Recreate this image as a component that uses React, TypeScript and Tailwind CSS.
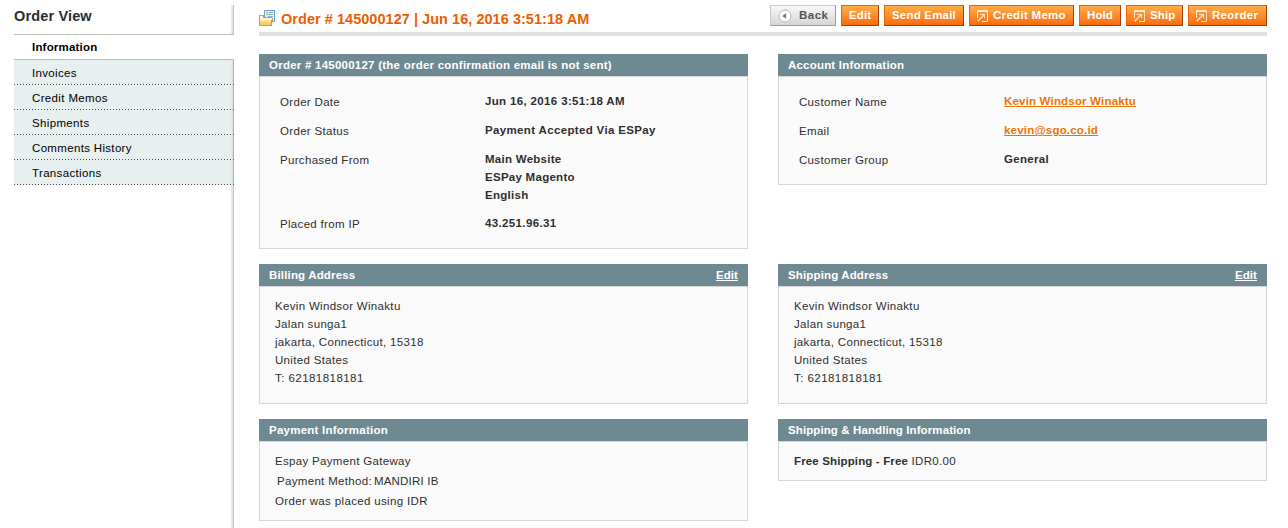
import type { ReactNode } from "react";

const tabs = [
  { label: "Invoices", tracking: "tracking-[0.32px]" },
  { label: "Credit Memos", tracking: "tracking-[0.36px]" },
  { label: "Shipments", tracking: "tracking-[0.35px]" },
  { label: "Comments History", tracking: "tracking-[0.33px]" },
  { label: "Transactions", tracking: "tracking-[0.35px]" },
];

function OrderIcon() {
  return (
    <svg width="16" height="16" viewBox="0 0 16 16" className="shrink-0" shapeRendering="crispEdges">
      <rect x="5" y="0" width="11" height="12" fill="#6d9fd8" />
      <rect x="6" y="1" width="9" height="10" fill="#e6f1fc" />
      <rect x="7" y="2" width="2" height="1" fill="#79b06c" />
      <rect x="10" y="2" width="4" height="1" fill="#7ba6d8" />
      <rect x="7" y="4" width="7" height="1" fill="#8ebd86" />
      <rect x="9" y="6" width="5" height="1" fill="#8eb2dc" />
      <rect x="13" y="8" width="1" height="1" fill="#8eb2dc" />
      <path d="M0 5h5v2h8v1h1v3h-1v5H0z" fill="#d39a35" />
      <path d="M1 6h3v2h9v2H1z" fill="#fff3d0" />
      <path d="M1 10h11v5H1z" fill="#f6cf68" />
      <path d="M1 10h11v2H1z" fill="#fbe39a" />
    </svg>
  );
}

function BackIcon() {
  return (
    <svg width="14" height="14" viewBox="0 0 14 14" className="shrink-0">
      <circle cx="7" cy="7" r="6" fill="#fff" stroke="#b8b8b8" />
      <path d="M4.2 7L8.2 4.2v5.6z" fill="#777" />
    </svg>
  );
}

function OpenIcon() {
  return (
    <svg width="11" height="12" viewBox="0 0 11 12" className="shrink-0" fill="none" stroke="#ffe4c8">
      <path d="M0.5 8V0.5h10v11H5" />
      <path d="M0 1.5h11" />
      <path d="M3 4.5h4.5V8" />
      <path d="M7.5 4.5L0.7 11.3" strokeWidth="1.3" />
    </svg>
  );
}

function Button({ children, className, icon, back }: { children: ReactNode; className: string; icon?: ReactNode; back?: boolean }) {
  const tone = back
    ? "border-t-[#c9c9c9] border-l-[#c9c9c9] border-r-[#9d9d9d] border-b-[#9d9d9d] bg-linear-to-b from-[#f8f8f8] to-[#d5d5d5] text-[#555]"
    : "border-t-[#ed6502] border-l-[#ed6502] border-r-[#a04300] border-b-[#a04300] bg-linear-to-b from-[#ffac47] to-[#f76b05] text-white";
  return (
    <button className={`flex h-[21px] items-center border pl-[7px] text-left text-[11.5px] leading-[18px] font-bold whitespace-nowrap ${tone} ${className}`}>
      {icon}
      <span className="pb-[2px]">{children}</span>
    </button>
  );
}

function Card({ title, edit, className, tracking, children }: { title: string; edit?: boolean; className: string; tracking: string; children: ReactNode }) {
  return (
    <section className={`w-[489px] ${className}`}>
      <header className="flex h-[22px] justify-between bg-[#6f8992] px-[10px] leading-[22px] font-bold text-white">
        <h4 className={tracking}>{title}</h4>
        {edit && <a className="tracking-[0.1px] underline">Edit</a>}
      </header>
      <div className="h-[calc(100%-22px)] border border-[#d6d6d6] bg-[#fafafa]">{children}</div>
    </section>
  );
}

function Row({ label, tracking, className = "mb-[11px]", children }: { label: string; tracking: string; className?: string; children: ReactNode }) {
  return (
    <div className={`flex ${className}`}>
      <div className="-mb-px w-[205px] pt-px">{label}</div>
      <div className={`font-bold ${tracking}`}>{children}</div>
    </div>
  );
}

function Address() {
  return (
    <address className="px-[15px] pt-[10px] not-italic">
      Kevin Windsor Winaktu<br />Jalan sunga1<br />jakarta, Connecticut, 15318<br />United States<br /><span className="tracking-[0.45px]">T: 62181818181</span>
    </address>
  );
}

export default function App() {
  return (
    <div className="flex h-[528px] w-[1288px] overflow-hidden bg-white font-['Liberation_Sans',Arial,sans-serif] text-[11.5px] leading-[18px] tracking-[0.32px] text-[#2f2f2f]">
      <aside className="ml-[14px] flex w-[220px] shrink-0 flex-col pt-[5px]">
        <div className="h-[29px] bg-linear-to-l from-[#c4c4c4] from-[1px] via-[#e0e0e0] via-[1px] to-[#ececec] to-[3px] bg-[length:3px_100%] bg-right bg-no-repeat">
          <h3 className="text-[14.5px] leading-[22px] font-bold tracking-[0.15px] text-[#253033]">Order View</h3>
        </div>
        <div className="h-[26px] border-y border-[#bbb] pl-[18px] leading-[24px] font-bold tracking-[0.2px] text-black">Information</div>
        {tabs.map((tab) => (
          <div key={tab.label} className="h-[25px] bg-[#e7efef]">
            <div className={`h-[24px] bg-linear-to-l from-[#a9b9b9] from-[1px] via-[#cfdcdc] via-[1px] to-[#e7efef] to-[3px] pl-[18px] leading-[26px] text-black ${tab.tracking}`}>
              {tab.label}
            </div>
            <div className="h-px bg-[repeating-linear-gradient(to_right,#555_0px_1px,transparent_1px_3px)]" />
          </div>
        ))}
        <div className="flex-1 bg-linear-to-l from-[#c4c4c4] from-[1px] via-[#e0e0e0] via-[1px] to-[#ececec] to-[3px] bg-[length:3px_100%] bg-right bg-no-repeat" />
      </aside>
      <main className="ml-[25px] w-[1008px] shrink-0">
        <div className="flex h-[36px] justify-between border-b-4 border-[#dfdfdf]">
          <div className="flex gap-[6px] pt-[10px]">
            <OrderIcon />
            <h3 className="text-[14.5px] leading-[18px] font-bold tracking-[0.04px] whitespace-nowrap text-[#eb5e00]">Order # 145000127 | Jun 16, 2016 3:51:18 AM</h3>
          </div>
          <div className="flex gap-[5px] pt-[5px]">
            <Button back className="w-[66px] gap-[7px] tracking-[0.5px]" icon={<BackIcon />}>Back</Button>
            <Button className="w-[38px] tracking-[0.1px]">Edit</Button>
            <Button className="w-[80px] tracking-[0.2px]">Send Email</Button>
            <Button className="w-[105px] gap-[5px] tracking-[0.3px]" icon={<OpenIcon />}>Credit Memo</Button>
            <Button className="w-[42px] tracking-[0.1px]">Hold</Button>
            <Button className="w-[57px] gap-[5px] tracking-[0.1px]" icon={<OpenIcon />}>Ship</Button>
            <Button className="w-[79px] gap-[5px] tracking-[0.3px]" icon={<OpenIcon />}>Reorder</Button>
          </div>
        </div>
        <div className="mt-[18px] flex items-start justify-between">
          <Card title="Order # 145000127 (the order confirmation email is not sent)" tracking="tracking-[0.24px]" className="h-[195px]">
            <div className="px-[20px] pt-[15px]">
              <Row label="Order Date" tracking="tracking-[0.35px]">Jun 16, 2016 3:51:18 AM</Row>
              <Row label="Order Status" tracking="tracking-[0.35px]">Payment Accepted Via ESPay</Row>
              <Row label="Purchased From" tracking="tracking-[0.27px]" className="mb-[10px]">Main Website<br />ESPay Magento<br />English</Row>
              <Row label="Placed from IP" tracking="tracking-[0.36px]">43.251.96.31</Row>
            </div>
          </Card>
          <Card title="Account Information" tracking="tracking-[0.2px]" className="h-[131px]">
            <div className="px-[20px] pt-[15px]">
              <Row label="Customer Name" tracking="tracking-[0.18px]"><a className="text-[#ea7601] underline">Kevin Windsor Winaktu</a></Row>
              <Row label="Email" tracking="tracking-[0.2px]"><a className="text-[#ea7601] underline">kevin@sgo.co.id</a></Row>
              <Row label="Customer Group" tracking="tracking-[0.3px]">General</Row>
            </div>
          </Card>
        </div>
        <div className="mt-[15px] flex items-start justify-between">
          <Card title="Billing Address" tracking="tracking-[0.16px]" edit className="h-[140px]"><Address /></Card>
          <Card title="Shipping Address" tracking="tracking-[0.14px]" edit className="h-[140px]"><Address /></Card>
        </div>
        <div className="mt-[15px] flex items-start justify-between">
          <Card title="Payment Information" tracking="tracking-[0.24px]" className="h-[102px]">
            <div className="px-[15px] pt-[10px]">
              <div>Espay Payment Gateway</div>
              <div className="my-[2px] flex gap-[2px] pl-[2px]"><span>Payment Method:</span><span className="tracking-[0.2px]">MANDIRI IB</span></div>
              <div className="tracking-[0.35px]">Order was placed using IDR</div>
            </div>
          </Card>
          <Card title="Shipping & Handling Information" tracking="tracking-[0.1px]" className="h-[62px]">
            <div className="px-[15px] pt-[10px]"><strong className="tracking-[0.14px]">Free Shipping - Free</strong> IDR0.00</div>
          </Card>
        </div>
      </main>
    </div>
  );
}
